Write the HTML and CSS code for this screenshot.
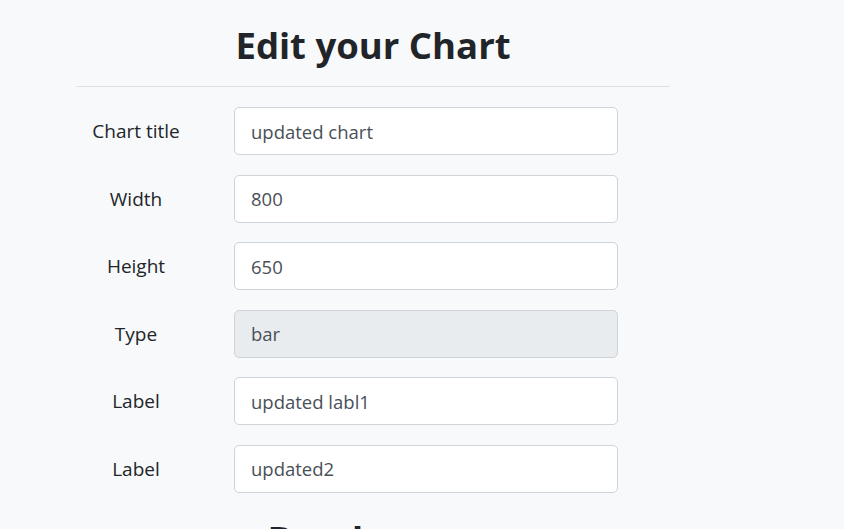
FILE: index.html
```html
<!DOCTYPE html>
<html lang="en">
<head>
<meta charset="utf-8">
<title>Edit your Chart</title>
<link rel="stylesheet" href="styles.css">
</head>
<body>
<main class="page">
  <h1 class="title">Edit your Chart</h1>
  <hr class="divider">
  <form class="form">
    <div class="row">
      <label class="label" for="title">Chart title</label>
      <input class="field" id="title" type="text" value="updated chart">
    </div>
    <div class="row">
      <label class="label" for="width">Width</label>
      <input class="field" id="width" type="text" value="800">
    </div>
    <div class="row">
      <label class="label" for="height">Height</label>
      <input class="field" id="height" type="text" value="650">
    </div>
    <div class="row">
      <label class="label" for="type">Type</label>
      <input class="field" id="type" type="text" value="bar" disabled>
    </div>
    <div class="row">
      <label class="label" for="label1">Label</label>
      <input class="field" id="label1" type="text" value="updated labl1">
    </div>
    <div class="row">
      <label class="label" for="label2">Label</label>
      <input class="field" id="label2" type="text" value="updated2">
    </div>
  </form>
  <h1 class="title sub">Bar dataset</h1>
</main>
</body>
</html>
```

FILE: styles.css
```css
html, body {
  margin: 0;
  padding: 0;
  background: #f8f9fa;
}
body {
  font-family: "Open Sans", "Noto Sans", sans-serif;
  color: #212529;
}
.page {
  width: 594px;
  margin-left: 76px;
  padding-top: 21px;
}
.title {
  margin: 0;
  text-align: center;
  font-size: 36.5px;
  font-weight: 700;
  line-height: 48px;
  color: #212529;
}
.divider {
  margin: 17px 0 20px;
  border: 0;
  border-top: 1px solid #dfe1e3;
}
.form {
  display: flex;
  flex-direction: column;
  gap: 19.5px;
}
.row {
  display: flex;
  align-items: center;
}
.label {
  width: 120px;
  text-align: center;
  font-size: 19px;
  color: #212529;
}
.field {
  box-sizing: border-box;
  margin-left: 38px;
  width: 384px;
  height: 48px;
  padding: 8px 16px;
  font-family: inherit;
  font-size: 18.5px;
  line-height: 30px;
  color: #495057;
  background: #fff;
  border: 1px solid #ced4da;
  border-radius: 5px;
  outline: none;
}
.field:disabled {
  background: #e9ecef;
  color: #495057;
  opacity: 1;
}
.sub {
  margin-top: 22px;
}
```
